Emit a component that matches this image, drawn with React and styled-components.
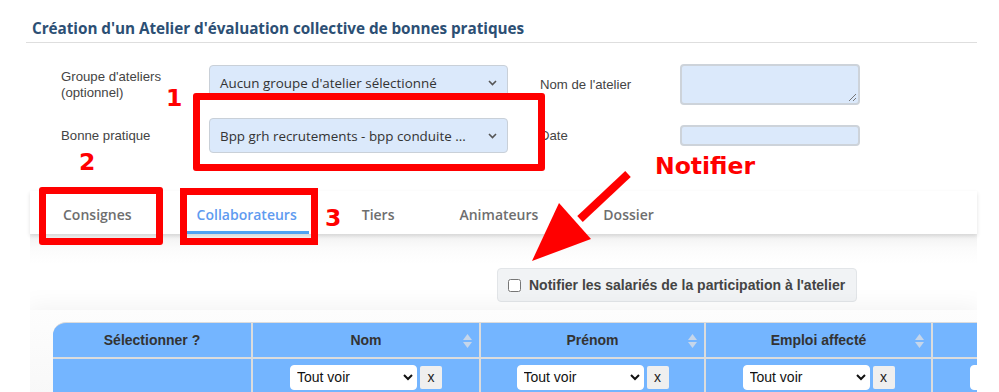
import React from "react";
import styled, { createGlobalStyle } from "styled-components";

const Global = createGlobalStyle`
  html, body { margin: 0; padding: 0; background: #fff; }
  body { font-family: "Liberation Sans", Arial, sans-serif; }
  * { box-sizing: border-box; }
`;

const Root = styled.div`
  position: relative;
  width: 999px;
  height: 392px;
  overflow: hidden;
  background: #fff;
`;

const Container = styled.div`
  margin-left: 26px;
  width: 951px;
`;

const Title = styled.h1`
  margin: 0;
  padding: 18px 0 4px 6px;
  font-family: "Open Sans", sans-serif;
  font-weight: 700;
  font-size: 15.3px;
  line-height: 20px;
  color: #2c4f74;
  border-bottom: 1px solid #dedede;
  letter-spacing: -0.05px;
`;

const FormGrid = styled.div`
  display: grid;
  grid-template-columns: 148px 331px 140px 181px;
  grid-template-rows: 41px 35px;
  row-gap: 13px;
  align-items: center;
  margin-top: 21px;
  padding-left: 35px;
`;

const Label = styled.div`
  font-size: 13.2px;
  line-height: 16px;
  color: #444;
`;

const FakeSelect = styled.div`
  width: 299px;
  height: 35px;
  display: flex;
  align-items: center;
  justify-content: space-between;
  padding: 0 10px;
  background: #dbe9fb;
  border: 1px solid #c9d0d8;
  border-radius: 4px;
  font-family: "Open Sans", sans-serif;
  font-size: 13.4px;
  color: #333;
  align-self: ${(p) => (p.$top ? "start" : "center")};
  margin-top: ${(p) => (p.$top ? "1px" : "0")};
`;

const Field = styled.div`
  width: 180px;
  height: ${(p) => p.$h}px;
  background: #dbe9fb;
  border: 2px solid #cdd3da;
  border-radius: 4px;
  position: relative;
`;

const Grip = styled.svg`
  position: absolute;
  right: 1px;
  bottom: 1px;
`;

const TabBar = styled.div`
  margin: 38px 0 0 4px;
  width: 947px;
  height: 43px;
  display: flex;
  gap: 41px;
  padding-left: 21px;
  background: #fff;
  box-shadow: 0 2px 4px rgba(0, 0, 0, 0.12);
  position: relative;
  z-index: 1;
`;

const Tab = styled.div`
  height: 43px;
  padding: 14px 12px 0;
  font-family: "Open Sans", sans-serif;
  font-weight: 600;
  font-size: 14px;
  line-height: 20px;
  color: ${(p) => (p.$active ? "#5f9bf0" : "#6e6e6e")};
  border-bottom: 3px solid ${(p) => (p.$active ? "#4fa3f3" : "transparent")};
`;

const Panel = styled.div`
  margin-left: 4px;
  width: 947px;
  height: 170px;
  background: linear-gradient(#f1f1f1 0px, #fbfbfb 14px, #ffffff 30px);
  padding-top: 34px;
  overflow: hidden;
`;

const NotifyBox = styled.label`
  display: flex;
  align-items: center;
  gap: 8px;
  margin-left: 467px;
  width: 360px;
  height: 34px;
  padding-left: 10px;
  background: #f1f3f5;
  border: 1px solid #e2e5e8;
  border-radius: 4px;
  font-size: 14px;
  font-weight: 700;
  color: #444;
  white-space: nowrap;
`;

const Check = styled.input`
  margin: 0;
  width: 13px;
  height: 13px;
`;

const Card = styled.div`
  margin-top: 8px;
  padding: 12px 0 0 23px;
  background: linear-gradient(#fdfdfd, #f6f6f6);
  box-shadow: 0 0 22px 4px rgba(0, 0, 0, 0.05);
  height: 120px;
`;

const Table = styled.div`
  display: grid;
  grid-template-columns: 198px 226px 223px 225px 226px;
  grid-template-rows: 34px 36px;
  gap: 2px;
  background: #dcdcdc;
  border-top: 1px solid #dcdcdc;
  border-top-left-radius: 13px;
  overflow: hidden;
  width: 1110px;
`;

const Th = styled.div`
  position: relative;
  background: #74b5ff;
  display: flex;
  align-items: center;
  justify-content: center;
  font-size: 14px;
  font-weight: 700;
  color: #333;
`;

const SortIcon = styled.svg`
  position: absolute;
  right: 7px;
  top: 11px;
`;

const Td = styled.div`
  background: #74b5ff;
  display: flex;
  align-items: center;
  justify-content: center;
  gap: 3px;
`;

const FilterSelect = styled.select`
  width: 127px;
  height: 25px;
  border: 1px solid #fff;
  border-radius: 4px;
  background: #fff;
  font-family: "Liberation Sans", Arial, sans-serif;
  font-size: 14px;
  color: #111;
  padding: 0 2px;
`;

const XButton = styled.button`
  width: 22px;
  height: 23px;
  border: none;
  border-radius: 2px;
  background: #efefef;
  font-family: "Liberation Sans", Arial, sans-serif;
  font-size: 14px;
  color: #222;
  padding: 0;
`;

const Mark = styled.div`
  position: absolute;
  left: ${(p) => p.$x}px;
  top: ${(p) => p.$y}px;
  width: ${(p) => p.$w}px;
  height: ${(p) => p.$h}px;
  border: 7px solid #ff0000;
  border-radius: ${(p) => (p.$r ? 3 : 0)}px;
  z-index: 5;
`;

const Note = styled.div`
  position: absolute;
  left: ${(p) => p.$x}px;
  top: ${(p) => p.$y}px;
  font-family: "DejaVu Sans", sans-serif;
  font-weight: 700;
  font-size: 23.5px;
  line-height: 28px;
  color: #ff0000;
  z-index: 5;
`;

const Arrow = styled.svg`
  position: absolute;
  left: 520px;
  top: 165px;
  z-index: 5;
`;

const Chevron = () => (
  <svg width="9" height="6" viewBox="0 0 9 6">
    <path d="M1 1 L4.5 4.5 L8 1" fill="none" stroke="#555" strokeWidth="1.6" />
  </svg>
);

const Sort = () => (
  <SortIcon width="9" height="14" viewBox="0 0 9 14">
    <path d="M4.5 0 L9 6 L0 6 Z" fill="#c6d6ea" />
    <path d="M4.5 14 L9 8 L0 8 Z" fill="#c6d6ea" />
  </SortIcon>
);

const Filter = () => (
  <Td>
    <FilterSelect defaultValue="all">
      <option value="all">Tout voir</option>
    </FilterSelect>
    <XButton>x</XButton>
  </Td>
);

export default function App() {
  return (
    <Root>
      <Global />
      <Container>
        <Title>Création d'un Atelier d'évaluation collective de bonnes pratiques</Title>
        <FormGrid>
          <Label>
            Groupe d'ateliers
            <br />
            (optionnel)
          </Label>
          <FakeSelect $top>
            <span>Aucun groupe d'atelier sélectionné</span>
            <Chevron />
          </FakeSelect>
          <Label>Nom de l'atelier</Label>
          <Field $h={41}>
            <Grip width="9" height="9" viewBox="0 0 9 9">
              <path d="M8 1 L1 8 M8 5 L5 8" stroke="#777" strokeWidth="1" />
            </Grip>
          </Field>
          <Label>Bonne pratique</Label>
          <FakeSelect>
            <span>Bpp grh recrutements - bpp conduite ...</span>
            <Chevron />
          </FakeSelect>
          <Label>Date</Label>
          <Field $h={21} />
        </FormGrid>
        <TabBar>
          <Tab>Consignes</Tab>
          <Tab $active>Collaborateurs</Tab>
          <Tab>Tiers</Tab>
          <Tab>Animateurs</Tab>
          <Tab>Dossier</Tab>
        </TabBar>
        <Panel>
          <NotifyBox>
            <Check type="checkbox" />
            Notifier les salariés de la participation à l'atelier
          </NotifyBox>
          <Card>
            <Table>
              <Th>Sélectionner ?</Th>
              <Th>
                Nom
                <Sort />
              </Th>
              <Th>
                Prénom
                <Sort />
              </Th>
              <Th>
                Emploi affecté
                <Sort />
              </Th>
              <Th />
              <Td />
              <Filter />
              <Filter />
              <Filter />
              <Filter />
            </Table>
          </Card>
        </Panel>
      </Container>

      <Mark $x={193} $y={93} $w={352} $h={78} $r />
      <Mark $x={39} $y={187} $w={124} $h={58} $r />
      <Mark $x={180} $y={188} $w={138} $h={57} />
      <Note $x={166} $y={84}>1</Note>
      <Note $x={79} $y={148}>2</Note>
      <Note $x={325} $y={204}>3</Note>
      <Note $x={655} $y={152}>Notifier</Note>
      <Arrow width="120" height="100" viewBox="0 0 120 100">
        <path d="M108 9 L60 54" stroke="#ff0000" strokeWidth="8" strokeLinecap="butt" />
        <path d="M12 96 L39 38 L71 74 Z" fill="#ff0000" />
      </Arrow>
    </Root>
  );
}
